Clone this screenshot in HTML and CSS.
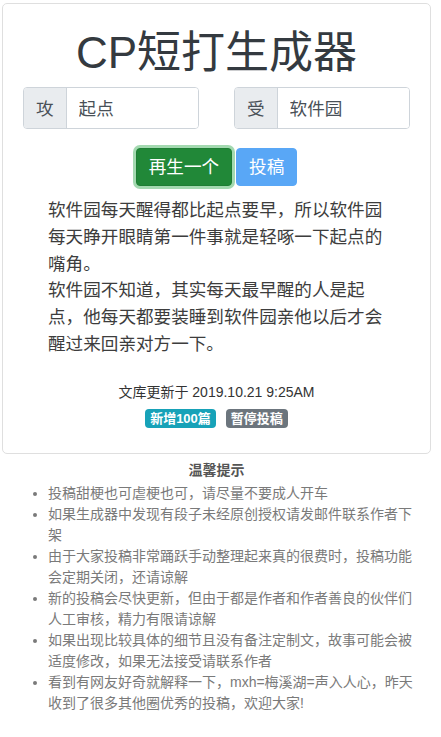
FILE: index.html
```html
<!DOCTYPE html>
<html lang="zh-CN">
<head>
    <meta charset="UTF-8">
    <meta name="viewport" content="width=device-width, initial-scale=1.0">
    <title>CP短打生成器</title>
    <link rel="stylesheet" href="styles.css">
</head>
<body>
    <div class="wrapper">
        <!-- Generator card -->
        <div class="card">
            <h1 class="title">CP短打生成器</h1>

            <div class="names">
                <div class="input-group">
                    <span class="prepend">攻</span>
                    <input type="text" class="name-input" value="起点">
                </div>
                <div class="input-group">
                    <span class="prepend">受</span>
                    <input type="text" class="name-input" value="软件园">
                </div>
            </div>

            <div class="actions">
                <button class="btn btn-success">再生一个</button>
                <button class="btn btn-primary" disabled>投稿</button>
            </div>

            <div class="story">
                <p>软件园每天醒得都比起点要早，所以软件园每天睁开眼睛第一件事就是轻啄一下起点的嘴角。</p>
                <p>软件园不知道，其实每天最早醒的人是起点，他每天都要装睡到软件园亲他以后才会醒过来回亲对方一下。</p>
            </div>

            <div class="updated">文库更新于 2019.10.21 9:25AM</div>
            <div class="badges">
                <span class="badge badge-info">新增100篇</span>
                <span class="badge badge-secondary">暂停投稿</span>
            </div>
        </div>

        <!-- Tips -->
        <div class="tips">
            <h2>温馨提示</h2>
            <ul>
                <li>投稿甜梗也可虐梗也可，请尽量不要成人开车</li>
                <li>如果生成器中发现有段子未经原创授权请发邮件联系作者下架</li>
                <li>由于大家投稿非常踊跃手动整理起来真的很费时，投稿功能会定期关闭，还请谅解</li>
                <li>新的投稿会尽快更新，但由于都是作者和作者善良的伙伴们人工审核，精力有限请谅解</li>
                <li>如果出现比较具体的细节且没有备注定制文，故事可能会被适度修改，如果无法接受请联系作者</li>
                <li>看到有网友好奇就解释一下，mxh=梅溪湖=声入人心，昨天收到了很多其他圈优秀的投稿，欢迎大家!</li>
            </ul>
        </div>
    </div>
</body>
</html>
```

FILE: styles.css
```css
body{
    margin: 0;
    font-family: "Liberation Sans", "Noto Sans CJK SC", sans-serif;
    color: #333;
    background: #fff;
}
.wrapper{
    width: 429px;
    margin-left: 2px;
    padding-top: 3px;
}
.card{
    border: 1px solid #dfdfdf;
    border-radius: 5px;
    padding: 20px 20px 25px;
    text-align: center;
}
.title{
    font-size: 44px;
    font-weight: 400;
    line-height: 1.2;
    color: #343a40;
    margin: 3px 0 7px;
}
.names{
    display: grid;
    grid-template-columns: 176px 176px;
    justify-content: space-between;
}
.input-group{
    display: flex;
    height: 40px;
    border: 1px solid #ced4da;
    border-radius: 4px;
    overflow: hidden;
}
.prepend{
    display: flex;
    align-items: center;
    padding: 0 12px;
    background: #e9ecef;
    border-right: 1px solid #ced4da;
    color: #495057;
    font-size: 17.6px;
}
.name-input{
    flex: 1;
    min-width: 0;
    border: none;
    padding: 0 12px;
    font-family: inherit;
    font-size: 17.6px;
    color: #495057;
    outline: none;
}
.actions{
    margin-top: 19px;
    display: flex;
    justify-content: center;
    gap: 4px;
}
.btn{
    font-family: inherit;
    font-size: 17.6px;
    line-height: 1.5;
    padding: 5px 12px;
    border: 1px solid transparent;
    border-radius: 4px;
    color: #fff;
}
.btn-success{
    background: #218838;
    border-color: #1e7e34;
    box-shadow: 0 0 0 3px rgba(72, 180, 97, .5);
}
.btn-primary{
    background: #59a7f6;
    border-color: #59a7f6;
}
.story{
    text-align: left;
    padding: 0 25px;
    margin-top: 11px;
    font-size: 17.6px;
    line-height: 1.52;
    color: #3d3d3d;
}
.story p{
    margin: 0;
}
.updated{
    margin-top: 24px;
    font-size: 14px;
    line-height: 1.5;
    color: #333;
}
.badges{
    margin-top: 6px;
    display: flex;
    justify-content: center;
    gap: 10px;
}
.badge{
    display: inline-block;
    font-size: 13px;
    font-weight: bold;
    line-height: 1;
    padding: 3px 5px;
    border-radius: 4px;
    color: #fff;
}
.badge-info{
    background: #17a2b8;
}
.badge-secondary{
    background: #6c757d;
}
.tips{
    padding: 6px 13px 0 46px;
    font-size: 14px;
    line-height: 1.5;
    color: #7a7a7a;
}
.tips h2{
    margin: 0 0 2px -33px;
    text-align: center;
    font-size: 14px;
    font-weight: bold;
    color: #555;
}
.tips ul{
    margin: 0;
    padding: 0;
}
```
